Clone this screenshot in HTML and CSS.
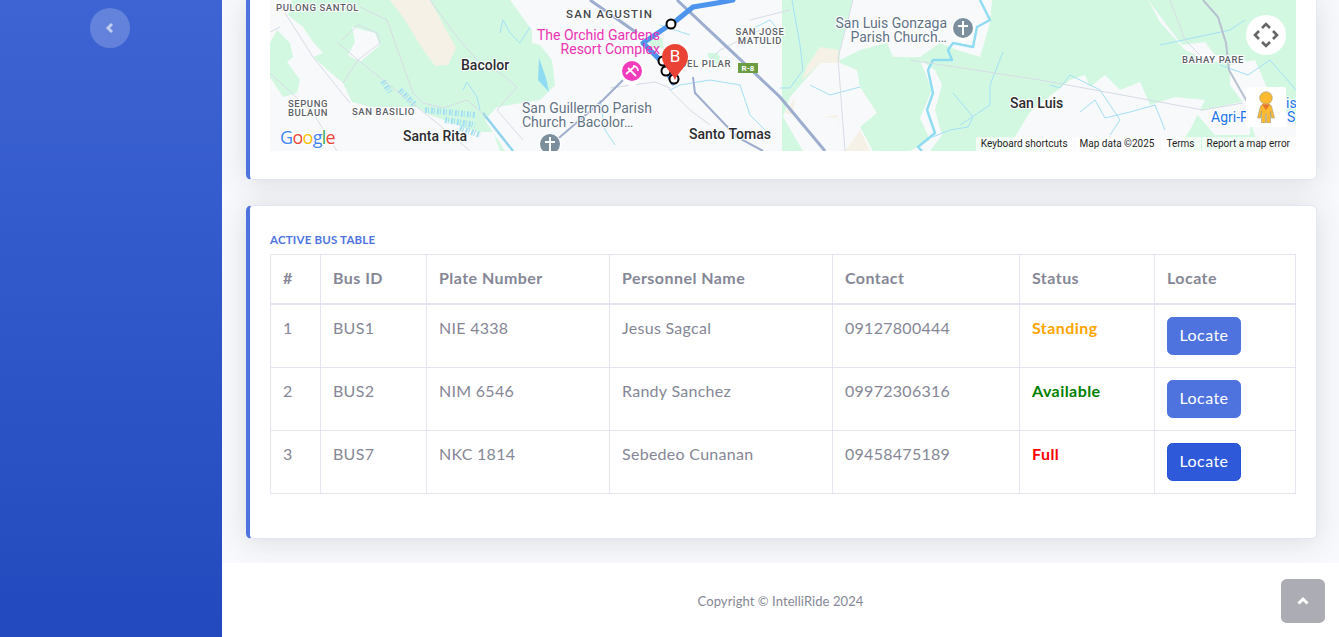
FILE: index.html
```html
<!DOCTYPE html>
<html lang="en">
<head>
<meta charset="utf-8">
<title>IntelliRide</title>
<link rel="stylesheet" href="styles.css">
</head>
<body>
<div class="wrapper">
  <aside class="sidebar">
    <button class="toggle" aria-label="Toggle sidebar">
      <svg width="10" height="12" viewBox="0 0 10 12"><path class="toggle-icon" d="M7 2 L3 6 L7 10"/></svg>
    </button>
  </aside>
  <div class="content">
    <main class="container">
      <section class="card map-card">
        <div class="map">
          <svg class="map-svg" width="1026" height="151" viewBox="0 0 1026 151">
            <rect class="g" width="1026" height="151"/>
            <!-- settled land -->
            <path class="w" d="M0 0H22L18 15L33 27L43 42L53 53L43 57L60 72L73 83L82 102L100 107L147 107L160 115L207 132L223 132L230 151H0V77L13 97L27 93L30 80L17 62L23 57L20 43L7 30L0 43Z"/>
            <path class="w" d="M82 27L105 33L110 45L90 62L78 55L85 42Z"/>
            <path class="w" d="M240 0L262 30L262 43L270 45L282 60L285 85L270 100L227 107L215 120L235 151H512V0Z"/>
            <path class="w" d="M520 97L550 63L570 63L587 70L590 87L607 113L590 127L603 151H533L513 117Z"/>
            <path class="w" d="M583 0L570 50L570 60L590 50L617 43L623 57L650 57L670 43L687 50L710 57L720 23L722 0Z"/>
            <path class="w" d="M650 60L662 90L650 118L660 140L640 151H660L672 135L665 110L672 85L665 70Z"/>
            <path class="w" d="M740 145L760 112L800 80L815 75L820 87L835 75L850 90L870 82L880 105L905 97L935 100L920 130L905 151H800Z"/>
            <path class="w" d="M878 0L893 20L912 45L935 42L945 55L975 60L985 70L975 66L960 60L940 62L915 50L890 22Z"/>
            <path class="w" d="M960 65L985 60L1000 95L1026 125V151H990L975 105L960 85Z"/>
            <path class="w" d="M925 112L980 100V135L945 135Z"/>
            <path class="g" d="M437 53L448 53L452 62L442 66Z"/>
            <path class="g" d="M378 40L392 38L394 48L382 48Z"/>
            <!-- sand -->
            <path class="t" d="M120 0H160L172 22L186 48L178 65L165 66L150 45L135 20Z"/>
            <path class="t" d="M537 66L550 47L568 50L570 63L550 63L532 80Z"/>
            <path class="t" d="M515 113L525 97L523 115Z"/>
            <path class="t" d="M553 117L567 115L570 135L568 118Z"/>
            <path class="t" d="M590 130L600 151H575Z"/>
            <!-- water -->
            <path class="lake" d="M269 58L276 78L279 92L268 80Z"/>
            <path class="river" d="M710 0L720 20L707 27L703 47L683 43L678 50L682 60L663 60L658 70L663 93L657 110L665 133L648 147L652 151"/>
            <path class="stream" d="M230 33L233 20L240 33L250 43L260 27M193 90L197 82L207 97L210 110M522 0L530 45L533 70L520 88L510 88M683 93L703 117L698 127L680 130L660 138M733 52L720 85L720 105L690 125M890 45L960 30L975 20M950 65L978 75L1000 60L1026 90M810 112L825 100L835 118L860 112L885 105L895 130M780 85L790 88L800 75L830 90L850 120L840 135M400 90L410 85L440 80L470 85L480 115L500 135M540 85L560 95L590 87M330 100L335 130L345 145M480 30L500 20L510 32M390 25L420 35"/>
            <path class="canal" d="M213 113L243 151"/>
            <path class="dots" d="M113 81L120 92M130 90L145 105M155 110L205 115M175 120L205 125M190 128L210 135"/>
            <!-- roads -->
            <path class="road" d="M15 13L43 57L80 103M0 73L43 113L67 151M0 32L10 27M90 7L117 20L143 93L153 103L173 108L197 100L217 117M67 42L88 60L110 43L107 33L88 25L72 40M88 60L73 83M88 60L113 80L147 107L167 123L200 151M160 0L187 37L207 60L233 75L247 87L227 110L253 140M430 70L450 50L490 30M398 88L420 110L440 125M340 88L385 82L400 88M583 0L568 58L575 151M640 60L770 80L863 97L933 110L973 103M480 20L520 10M900 0L915 40L940 65"/>
            <path class="hwy-soft" d="M933 0L948 17L956 43L959 70L976 100L990 120"/>
            <path class="hwy" d="M320 0L367 33M407 0L510 97L555 151"/>
            <path class="hwy thin" d="M423 77L425 93L467 137L493 151M353 80L333 100L290 137L270 151"/>
            <!-- labels -->
            <text class="lb-s" x="6" y="11">PULONG SANTOL</text>
            <text class="lb-s mid" x="38" y="107">SEPUNG</text>
            <text class="lb-s mid" x="38" y="116">BULAUN</text>
            <text class="lb-s" x="82" y="115">SAN BASILIO</text>
            <text class="lb-m" x="133" y="141">Santa Rita</text>
            <text class="lb-m" x="191" y="70">Bacolor</text>
            <text class="lb-a" x="296" y="18">SAN AGUSTIN</text>
            <text class="lb-c" x="252" y="113">San Guillermo Parish</text>
            <text class="lb-c" x="252" y="127">Church - Bacolor…</text>
            <text class="lb-s end" x="461" y="67">DEL PILAR</text>
            <text class="lb-s mid" x="490" y="35">SAN JOSE</text>
            <text class="lb-s mid" x="490" y="44">MATULID</text>
            <text class="lb-m" x="419" y="139">Santo Tomas</text>
            <text class="lb-c end" x="677" y="28">San Luis Gonzaga</text>
            <text class="lb-c end" x="677" y="42">Parish Church…</text>
            <text class="lb-m" x="740" y="108">San Luis</text>
            <text class="lb-s" x="912" y="63">BAHAY PARE</text>
            <text class="lb-b" x="941" y="122">Agri-Pinoy</text>
            <text class="lb-b" x="1017" y="122">S</text>
            <text class="lb-b" x="1016" y="108">is</text>
            <text class="logo" x="10" y="144"><tspan class="lg-b">G</tspan><tspan class="lg-r">o</tspan><tspan class="lg-y">o</tspan><tspan class="lg-b">g</tspan><tspan class="lg-g">l</tspan><tspan class="lg-r">e</tspan></text>
            <!-- route -->
            <path class="route" d="M463 0L447 3L423 7L407 20L373 43L393 63L403 83"/>
            <text class="lb-p end" x="390" y="40">The Orchid Gardens</text>
            <text class="lb-p end" x="390" y="54">Resort Complex</text>
            <circle class="stop" cx="401" cy="24" r="4.5"/>
            <circle class="stop" cx="393" cy="61" r="4.5"/>
            <circle class="stop" cx="396" cy="71" r="4.5"/>
            <circle class="stop" cx="404" cy="79" r="4.5"/>
            <!-- R-8 badge -->
            <rect class="badge" x="468" y="63" width="20" height="10"/>
            <text class="badge-t" x="478" y="71">R-8</text>
            <!-- POI markers -->
            <path class="halo" d="M362 88L354 81A12 12 0 1 1 370 81Z"/>
            <circle class="poi" cx="362" cy="71" r="10"/>
            <path class="poi-i" d="M356 74L364 67M358 68L366 76M363 66A5 5 0 0 1 368 71"/>
            <path class="halo" d="M693 44L686 38A11.5 11.5 0 1 1 700 38Z"/>
            <circle class="church" cx="693" cy="28" r="10"/>
            <path class="cross" d="M693 21V35M688 26H698"/>
            <path class="halo" d="M280 160L273 154A11.5 11.5 0 1 1 287 154Z"/>
            <circle class="church" cx="280" cy="144" r="10"/>
            <path class="cross" d="M280 137V151M275 142H285"/>
            <!-- destination pin -->
            <path class="pin" d="M405 80C402 72 392 66 392 57A13 13 0 0 1 418 57C418 66 408 72 405 80Z"/>
            <text class="pin-t" x="405" y="62">B</text>
          </svg>
          <div class="pan">
            <svg width="28" height="28" viewBox="0 0 28 28"><path class="pan-i" d="M10 7L14 3L18 7M21 10L25 14L21 18M18 21L14 25L10 21M7 18L3 14L7 10"/></svg>
          </div>
          <div class="pegman">
            <svg width="20" height="32" viewBox="0 0 20 32"><circle class="peg" cx="10" cy="7" r="6.3"/><path class="peg" d="M4.5 15Q5.5 13 10 13Q14.500 13 15.500 15L18.500 27H15.500L14.500 20V32H10.500V23H9.500V32H5.500V20L4.500 27H1.500Z"/><path class="peg-n" d="M6 13.500H14L10 19Z"/></svg>
          </div>
          <div class="attrib">
            <span>Keyboard shortcuts</span>
            <span>Map data ©2025</span>
            <span>Terms</span>
            <span>Report a map error</span>
          </div>
        </div>
      </section>

      <section class="card table-card">
        <h6 class="card-title">Active Bus Table</h6>
        <table class="bus-table">
          <colgroup>
            <col class="c1"><col class="c2"><col class="c3"><col class="c4"><col class="c5"><col class="c6"><col class="c7">
          </colgroup>
          <thead>
            <tr><th>#</th><th>Bus ID</th><th>Plate Number</th><th>Personnel Name</th><th>Contact</th><th>Status</th><th>Locate</th></tr>
          </thead>
          <tbody>
            <tr><td>1</td><td>BUS1</td><td>NIE 4338</td><td>Jesus Sagcal</td><td>09127800444</td><td class="st st-standing">Standing</td><td><button class="btn">Locate</button></td></tr>
            <tr><td>2</td><td>BUS2</td><td>NIM 6546</td><td>Randy Sanchez</td><td>09972306316</td><td class="st st-available">Available</td><td><button class="btn">Locate</button></td></tr>
            <tr><td>3</td><td>BUS7</td><td>NKC 1814</td><td>Sebedeo Cunanan</td><td>09458475189</td><td class="st st-full">Full</td><td><button class="btn btn-hover">Locate</button></td></tr>
          </tbody>
        </table>
      </section>
    </main>
    <footer class="footer">Copyright © IntelliRide 2024</footer>
  </div>
  <a class="scroll-top" href="#" aria-label="Scroll to top">
    <svg width="14" height="10" viewBox="0 0 14 10"><path class="scroll-i" d="M2.500 7.500L7 3L11.500 7.500"/></svg>
  </a>
</div>
</body>
</html>
```
FILE: styles.css
```css
* { box-sizing: border-box; }
html, body { margin: 0; height: 100%; overflow: hidden; }
body {
  font-family: "Lato", "Noto Sans", "Liberation Sans", sans-serif;
  font-size: 16px;
  line-height: 24px;
  letter-spacing: .28px;
  color: #858796;
  background: #f8f9fc;
}
.wrapper { position: relative; display: flex; height: 637px; }

.sidebar {
  width: 222px;
  flex: none;
  display: flex;
  justify-content: center;
  align-items: flex-start;
  padding: 8px 2px 0 0;
  background: linear-gradient(180deg, #3e64d3 0%, #224abe 100%);
}
.toggle {
  width: 40px;
  height: 40px;
  padding: 0;
  border: 0;
  border-radius: 50%;
  background: rgba(255, 255, 255, .2);
  display: flex;
  align-items: center;
  justify-content: center;
}
.toggle-icon { fill: none; stroke: rgba(255, 255, 255, .6); stroke-width: 3; }

.content { flex: 1; min-width: 0; display: flex; flex-direction: column; }
.container {
  flex: 1;
  display: flex;
  flex-direction: column;
  gap: 25px;
  padding: 0 22px 24px 24px;
}
.card {
  background: #fff;
  border: 1px solid #e3e6f0;
  border-left: 4px solid #4e73df;
  border-radius: 5.6px;
  box-shadow: 0 2.4px 28px 0 rgba(58, 59, 69, .15);
}
.map-card {
  height: 180px;
  border-top: 0;
  border-top-left-radius: 0;
  border-top-right-radius: 0;
  padding: 0 20px;
}
.table-card { height: 334px; padding: 27px 20px 0; }
.card-title {
  margin: 0 0 7px;
  font-size: 11.5px;
  line-height: 14px;
  font-weight: 700;
  letter-spacing: .2px;
  text-transform: uppercase;
  color: #4e73df;
}

/* map */
.map { position: relative; height: 151px; overflow: hidden; background: #d3f8e2; letter-spacing: 0; }
.map-svg { display: block; font-family: Roboto, sans-serif; }
.g { fill: #d3f8e2; }
.w { fill: #f8f9fa; }
.t { fill: #f5f1e6; }
.lake { fill: #8fdcf2; }
.river { fill: none; stroke: #8fdcf2; stroke-width: 2.4; stroke-linejoin: round; }
.stream { fill: none; stroke: #a5e0f5; stroke-width: 1; stroke-linejoin: round; }
.canal { fill: none; stroke: #8fd3ee; stroke-width: 2.4; }
.dots { fill: none; stroke: #a2dff3; stroke-width: 6; stroke-dasharray: 2 1 1 2; }
.road { fill: none; stroke: #d6dce6; stroke-width: 1; }
.hwy { fill: none; stroke: #9cadcf; stroke-width: 3; }
.hwy.thin { stroke-width: 2; }
.hwy-soft { fill: none; stroke: #b8c1cf; stroke-width: 2; }
.route { fill: none; stroke: #4d94ee; stroke-width: 5; stroke-linejoin: round; stroke-linecap: round; }
.stop { fill: #fff; stroke: #000; stroke-width: 2; }
.pin { fill: #ea4335; }
.pin-t { fill: #fff; font-size: 17px; text-anchor: middle; }
.halo { fill: #fff; }
.poi { fill: #f23cbd; }
.poi-i { fill: none; stroke: #fff; stroke-width: 1.8; }
.church { fill: #7b8f9e; }
.cross { fill: none; stroke: #fff; stroke-width: 2; }
.badge { fill: #6b9c43; }
.badge-t { fill: #fff; font-size: 8px; font-weight: 700; text-anchor: middle; }

.lb-s, .lb-a, .lb-m, .lb-c, .lb-b, .logo {
  paint-order: stroke;
  stroke: #fff;
  stroke-width: 2px;
  stroke-linejoin: round;
}
.lb-s { font-size: 9.5px; font-weight: 500; letter-spacing: .6px; fill: #5d6168; }
.lb-a { font-size: 11.5px; font-weight: 500; letter-spacing: 1.2px; fill: #44474c; }
.lb-m { font-size: 14px; font-weight: 500; fill: #2b2c2f; }
.lb-p { font-size: 14px; fill: #ea33b5; }
.lb-c { font-size: 14px; fill: #5f7285; }
.lb-b { font-size: 14px; fill: #1a73e8; }
.mid { text-anchor: middle; }
.end { text-anchor: end; }
.logo { font-family: "Open Sans", sans-serif; font-size: 18px; font-weight: 500; letter-spacing: -.7px; }
.lg-b { fill: #4285f4; }
.lg-r { fill: #ea4335; }
.lg-y { fill: #fbbc05; }
.lg-g { fill: #34a853; }

.pan {
  position: absolute;
  top: 15px;
  right: 10px;
  width: 40px;
  height: 40px;
  border-radius: 50%;
  background: #fff;
  display: flex;
  align-items: center;
  justify-content: center;
}
.pan-i { fill: none; stroke: #666; stroke-width: 2.6; }
.pegman {
  position: absolute;
  top: 87px;
  right: 10px;
  width: 40px;
  height: 40px;
  border-radius: 2px;
  background: #fff;
  display: flex;
  align-items: center;
  justify-content: center;
}
.peg { fill: #fdb92f; stroke: #8f8f8f; stroke-width: .5; }
.peg-n { fill: #e8732a; }
.attrib {
  position: absolute;
  right: 0;
  bottom: 0;
  height: 14px;
  display: flex;
  gap: 1px;
  font-family: Roboto, sans-serif;
  font-size: 10px;
  line-height: 14px;
  color: #1f1f1f;
}
.attrib span { padding: 0 6px 0 5px; background: rgba(255, 255, 255, .7); }

/* table */
.bus-table { width: 100%; table-layout: fixed; border-collapse: collapse; }
.c1 { width: 50px; }
.c2 { width: 106px; }
.c3 { width: 183px; }
.c4 { width: 223px; }
.c5 { width: 187px; }
.c6 { width: 135px; }
.bus-table th, .bus-table td {
  padding: 12px;
  border: 1px solid #e3e6f0;
  text-align: left;
  vertical-align: top;
  line-height: 22px;
}
.bus-table th { font-weight: 700; letter-spacing: .45px; padding-bottom: 14px; border-bottom-width: 2px; }
.bus-table .st { font-weight: 700; letter-spacing: .45px; }
.bus-table .st-standing { color: #ffa500; }
.bus-table .st-available { color: #008000; }
.bus-table .st-full { color: #ff0000; }
.btn {
  display: block;
  height: 38px;
  width: 74px;
  padding: 0 0 2px;
  border: 1px solid #4e73df;
  border-radius: 5.6px;
  background: #4e73df;
  color: #fff;
  font: inherit;
  letter-spacing: .45px;
}
.btn-hover { background: #2e59d9; border-color: #2653d4; }

.footer {
  height: 74px;
  flex: none;
  display: flex;
  align-items: center;
  justify-content: center;
  padding-top: 2px;
  background: #fff;
  font-size: 13px;
  line-height: 20px;
  letter-spacing: .07px;
}
.scroll-top {
  position: absolute;
  right: 14px;
  bottom: 14px;
  width: 44px;
  height: 44px;
  border-radius: 5.6px;
  background: rgba(90, 92, 105, .5);
  display: flex;
  align-items: center;
  justify-content: center;
}
.scroll-i { fill: none; stroke: #fff; stroke-width: 3; }
```
